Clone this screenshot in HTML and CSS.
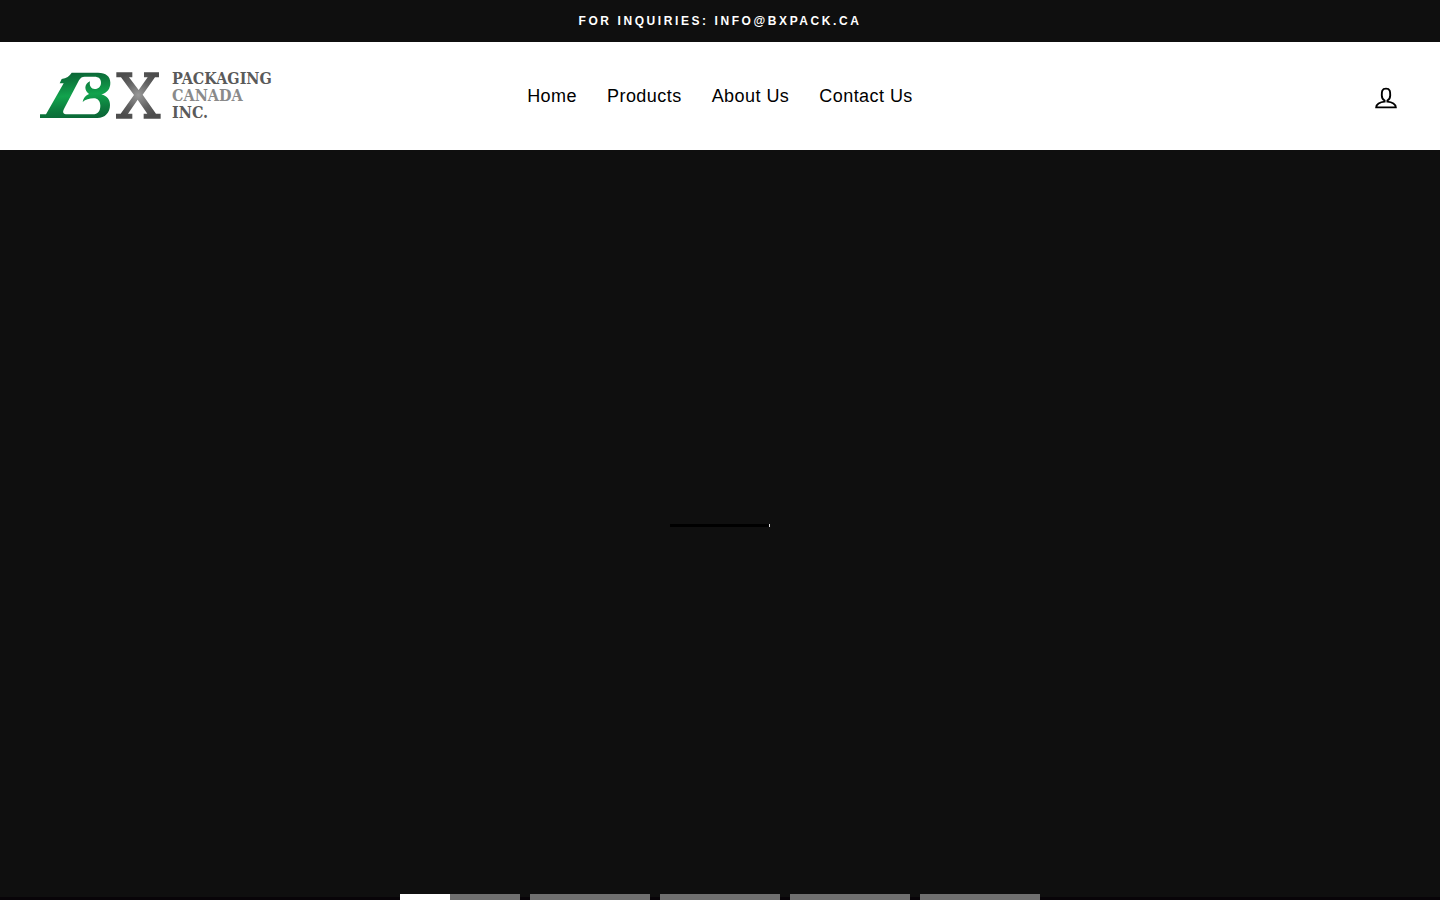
FILE: index.html
```html
<!DOCTYPE html>
<html lang="en">
<head>
<meta charset="utf-8">
<meta name="viewport" content="width=device-width, initial-scale=1">
<title>BX Packaging Canada Inc.</title>
<link rel="stylesheet" href="styles.css">
</head>
<body>
<div class="announcement">For inquiries: info@bxpack.ca</div>
<header class="site-header">
  <a class="logo" href="#" aria-label="BX Packaging Canada Inc.">
    <svg class="logo-mark" viewBox="30 33 363 146" aria-hidden="true">
      <defs>
        <linearGradient id="green" gradientUnits="userSpaceOnUse" x1="130" y1="36" x2="142" y2="176">
          <stop offset="0" stop-color="#0b6436"/>
          <stop offset=".2" stop-color="#0d7a3d"/>
          <stop offset=".5" stop-color="#12a34d"/>
          <stop offset=".8" stop-color="#0d7a3d"/>
          <stop offset="1" stop-color="#0b6737"/>
        </linearGradient>
        <radialGradient id="grey" gradientUnits="userSpaceOnUse" cx="325" cy="105" r="72">
          <stop offset="0" stop-color="#999"/>
          <stop offset=".6" stop-color="#626262"/>
          <stop offset="1" stop-color="#4d4d4d"/>
        </radialGradient>
      </defs>
      <path fill="url(#green)" fill-rule="evenodd" d="M30 163H48L101 70H89L95 57C109 55 119 48 125 38H204C228 38 241 49 241 68C241 86 232 98 214 103C232 109 240 119 240 135C240 158 225 174 202 174H30ZM164 50C156 50 152 53 147 61L103 145C96 158 99 163 112 163H188C204 163 211 152 211 137C211 123 203 115 191 115C178 115 166 119 158 126C160 114 167 106 177 102C163 92 161 73 180 64C177 78 184 87 194 87C206 87 213 79 213 68C213 56 206 50 193 50Z"/>
      <path fill="url(#grey)" d="M259 37H307V52H297L326 90L353 52H342V37H387V52H375L338 104L378 161H392V176H341V161H352L323 119L294 161H307V176H258V161H272L312 105L273 52H259Z"/>
    </svg>
    <span class="logo-text"><span>PACKAGING</span><span class="logo-light">CANADA</span><span>INC.</span></span>
  </a>
  <nav class="nav" aria-label="Primary">
    <a href="#">Home</a>
    <a href="#">Products</a>
    <a href="#">About Us</a>
    <a href="#">Contact Us</a>
  </nav>
  <a class="account" href="#" aria-label="Log in">
    <svg viewBox="0 0 64 64" aria-hidden="true"><path d="M35 39.84v-2.53c3.3-1.91 6-6.66 6-11.41 0-7.63 0-13.82-9-13.82s-9 6.19-9 13.82c0 4.75 2.7 9.51 6 11.41v2.53c-10.18.85-18 6-18 12.16h42c0-6.19-7.82-11.31-18-12.16z"/></svg>
  </a>
</header>
<main class="hero">
  <div class="loader" role="progressbar" aria-label="Loading"></div>
  <div class="dots">
    <button class="dot active" aria-label="Slide 1"></button>
    <button class="dot" aria-label="Slide 2"></button>
    <button class="dot" aria-label="Slide 3"></button>
    <button class="dot" aria-label="Slide 4"></button>
    <button class="dot" aria-label="Slide 5"></button>
  </div>
</main>
</body>
</html>
```
FILE: styles.css
```css
* { box-sizing: border-box; }
body {
  margin: 0;
  min-height: 100vh;
  display: flex;
  flex-direction: column;
  font-family: "Liberation Sans", Arial, sans-serif;
  color: #000;
  background: #fff;
}
a { color: inherit; text-decoration: none; }
.announcement {
  padding: 12px 16px;
  background: #0f0f0f;
  color: #fff;
  font-size: 12px;
  line-height: 18px;
  font-weight: 700;
  letter-spacing: 0.215em;
  text-align: center;
  text-transform: uppercase;
}
.site-header {
  display: grid;
  grid-template-columns: 1fr auto 1fr;
  align-items: center;
  padding: 28px 40px;
}
.logo {
  display: flex;
  align-items: center;
  gap: 11px;
  justify-self: start;
  padding-bottom: 1px;
}
.logo-mark { width: 121px; display: block; }
.logo-text {
  display: flex;
  flex-direction: column;
  font: 700 16px/17px "Roboto Slab", "DejaVu Serif Condensed", "DejaVu Serif", serif;
  color: #5a5a5a;
}
.logo-light { color: #8a8a8a; }
.nav {
  display: flex;
  gap: 30px;
  font-size: 18px;
  line-height: 52px;
  letter-spacing: 0.025em;
}
.account { justify-self: end; padding-top: 4px; margin-right: -1px; }
.account svg {
  display: block;
  width: 30px;
  height: 30px;
  fill: none;
  stroke: #000;
  stroke-width: 4;
}
.hero {
  flex: 1;
  position: relative;
  display: flex;
  align-items: center;
  justify-content: center;
  padding-top: 4px;
  background: #0f0f0f;
  border-bottom: 3px solid #080408;
}
.loader {
  width: 100px;
  height: 3px;
  background: #000;
  border-right: 1px solid #ddd;
}
.dots {
  position: absolute;
  bottom: -3px;
  left: 0;
  right: 0;
  display: flex;
  justify-content: center;
  gap: 10px;
}
.dot {
  width: 120px;
  height: 6px;
  padding: 0;
  border: 0;
  background: #707070;
}
.dot.active { background: linear-gradient(to right, #fff 50px, #707070 50px); }
```
